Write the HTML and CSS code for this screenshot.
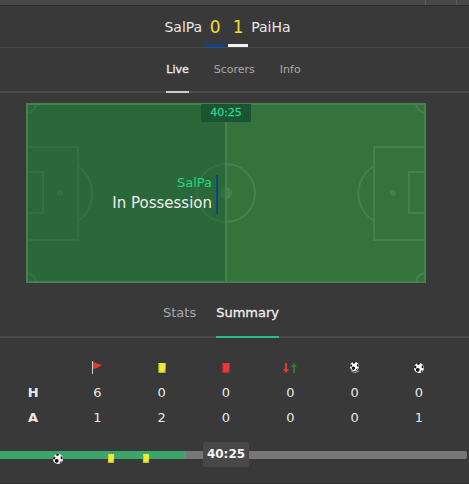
FILE: index.html
```html
<!DOCTYPE html>
<html lang="en">
<head>
<meta charset="utf-8">
<meta name="viewport" content="width=device-width, initial-scale=1">
<title>SalPa 0 1 PaiHa</title>
<link rel="stylesheet" href="styles.css">
</head>
<body>
<svg class="defs" aria-hidden="true">
  <symbol id="ball" viewBox="0 0 20 20">
    <circle cx="10" cy="10" r="10" fill="#fff"/>
    <path fill="#111" d="M7 0h5l-1 3-3 1-2-2zM16 4l3 3 0 4-3-1-1-3zM1 6l3-1 1 3-2 3-3-1zM6 10l5 1 0 4-3 3-4-2 0-4zM15 15l3-1-3 4-2 0z"/>
  </symbol>
  <symbol id="card" viewBox="0 0 8 11">
    <path fill="currentColor" d="M0 0h8v11H0z"/>
    <path fill="#000" fill-opacity=".22" d="M0 1h1v9H0zM0 10l6 0 2-5v6H0z"/>
  </symbol>
</svg>
<div class="toolbar"><span></span><span></span></div>
<header class="score">
  <span class="team">SalPa</span>
  <span class="goals home">0</span>
  <span class="goals away">1</span>
  <span class="team">PaiHa</span>
</header>
<nav class="tabs">
  <a class="tab active" href="#live">Live</a>
  <a class="tab" href="#scorers">Scorers</a>
  <a class="tab" href="#info">Info</a>
</nav>
<main>
  <section class="pitch" id="live">
    <svg class="field" viewBox="0 0 400 180" aria-hidden="true">
      <path fill="#35733d" d="M0 0h400v180H0z"/>
      <g fill="none" stroke="#43834b" stroke-width="2">
        <path d="M200 0v180"/>
        <circle cx="200" cy="90" r="29"/>
        <path d="M400 44h-52v93h52M400 69h-17v41h17M348 63a32 32 0 0 0 0 55M390 0a10 10 0 0 0 10 10M390 180a10 10 0 0 1 10-10"/>
        <path d="M0 44h52v93H0M0 69h17v41H0M52 63a34 34 0 0 1 0 55M10 0a10 10 0 0 1-10 10M10 180a10 10 0 0 0-10-10"/>
      </g>
      <g fill="#43834b">
        <circle cx="200" cy="90" r="6"/>
        <circle cx="34" cy="90" r="3"/>
        <circle cx="367" cy="90" r="3"/>
      </g>
      <path fill="#1f5d38" fill-opacity=".5" d="M0 0h199v180H0z"/>
      <path fill="none" stroke="#43834b" stroke-width="2" d="M1 1h398v178H1z"/>
    </svg>
    <time class="clock">40:25</time>
    <div class="possession">
      <span class="side">SalPa</span>
      <span>In Possession</span>
    </div>
  </section>
</main>
<nav class="tabs subtabs">
  <a class="tab" href="#stats">Stats</a>
  <a class="tab active" href="#summary">Summary</a>
</nav>
<section class="summary" id="summary">
  <table>
    <thead>
      <tr>
        <td></td>
        <th scope="col" aria-label="Corners"><svg width="10" height="13" viewBox="0 0 10 13"><path fill="#ccc" d="M0 0h1v13H0z"/><path fill="#e33b36" d="M1 1l9 3-5 3-4 1z"/></svg></th>
        <th scope="col" aria-label="Yellow cards"><svg class="yellow" width="8" height="10"><use href="#card"/></svg></th>
        <th scope="col" aria-label="Red cards"><svg class="red" width="8" height="10"><use href="#card"/></svg></th>
        <th scope="col" aria-label="Substitutions"><svg width="14" height="10" viewBox="0 0 14 10"><path fill="#e33b36" d="M2 0h2v6h2L3 10 0 6h2z"/><path fill="#217f35" d="M10 10h2V4h2l-3-4-3 4h2z"/></svg></th>
        <th scope="col" aria-label="Penalties"><svg width="10" height="12" viewBox="0 0 10 12"><use href="#ball" width="9" height="9"/><path fill="none" stroke="#aaa" d="M1 9q4 3 8 0"/></svg></th>
        <th scope="col" aria-label="Goals"><svg width="10" height="10"><use href="#ball"/></svg></th>
      </tr>
    </thead>
    <tbody>
      <tr><th scope="row">H</th><td>6</td><td>0</td><td>0</td><td>0</td><td>0</td><td>0</td></tr>
      <tr><th scope="row">A</th><td>1</td><td>2</td><td>0</td><td>0</td><td>0</td><td>1</td></tr>
    </tbody>
  </table>
</section>
<footer class="timeline">
  <div class="track">
    <div class="elapsed" style="width:39.8%"></div>
    <svg class="event" style="left:12.4%" width="10" height="10"><use href="#ball"/></svg>
    <svg class="event yellow" style="left:23.8%" width="7" height="9"><use href="#card"/></svg>
    <svg class="event yellow" style="left:31.2%" width="7" height="9"><use href="#card"/></svg>
    <time class="now">40:25</time>
  </div>
</footer>
</body>
</html>
```

FILE: styles.css
```css
* {
  box-sizing: border-box;
}

body {
  margin: 0;
  background: #393939;
  color: #e8e8e8;
  font-family: Verdana, "DejaVu Sans", sans-serif;
  font-size: 13px;
  line-height: 16px;
}

svg {
  display: block;
}

.defs {
  position: absolute;
  width: 0;
  height: 0;
}

.yellow {
  color: #efe73b;
}

.red {
  color: #e73a3a;
}

.toolbar {
  display: flex;
  justify-content: flex-end;
  height: 6px;
  background: #484848;
  border-bottom: 1px solid #303030;
}

.toolbar span {
  width: 31px;
  border-left: 1px solid #5a5a5a;
}

.toolbar span:last-child {
  width: 13px;
}

.score {
  display: flex;
  justify-content: center;
  height: 42px;
  padding-right: 14px;
  border-bottom: 1px solid #4a4a4a;
  font-size: 14px;
  line-height: 42px;
}

.goals {
  width: 20px;
  height: 41px;
  margin-left: 3px;
  border-bottom: 3px solid #f2f2f2;
  color: #f5dc3c;
  font-size: 17px;
  text-align: center;
}

.away {
  margin-right: 3px;
}

.home {
  border-color: #0e418f;
}

.tabs {
  display: flex;
  justify-content: center;
  gap: 25px;
  height: 45px;
  padding-right: 2px;
  border-bottom: 2px solid #4a4a4a;
  font-size: 11px;
  line-height: 44px;
}

.tab {
  height: 45px;
  border-bottom: 2px solid transparent;
  color: #aaa;
  text-decoration: none;
}

.tab.active {
  border-color: #ccc;
  color: #eee;
  -webkit-text-stroke: 0.3px;
}

main {
  padding: 10px 43px 0 26px;
}

.pitch {
  position: relative;
}

.field {
  width: 100%;
  height: auto;
}

.clock {
  position: absolute;
  top: 1px;
  left: 50%;
  width: 50px;
  transform: translateX(-50%);
  background: #1b5433;
  color: #25d688;
  font-size: 11px;
  line-height: 18px;
  text-align: center;
  -webkit-text-stroke: 0.3px;
}

.possession {
  position: absolute;
  top: 40%;
  right: 52%;
  display: flex;
  flex-direction: column;
  height: 39px;
  padding-right: 4px;
  border-right: 2px solid #0e4383;
  color: #eee;
  font-size: 15px;
  line-height: 24px;
  text-align: right;
}

.side {
  color: #25d688;
  font-size: 13px;
  line-height: 16px;
}

.subtabs {
  gap: 20px;
  height: 55px;
  padding-right: 27px;
  font-size: 13px;
  line-height: 60px;
}

.subtabs .tab {
  height: 55px;
}

.subtabs .active {
  border-color: #2dbb8d;
}

.summary {
  padding: 17px 18px 0 1px;
}

table {
  width: 100%;
  table-layout: fixed;
  border-collapse: collapse;
}

th,
td {
  height: 25px;
  padding: 0;
  text-align: center;
}

th svg {
  margin: 0 auto;
}

.timeline {
  padding: 21px 2px 24px 0;
  border-bottom: 1px solid #303030;
}

.track {
  position: relative;
  height: 8px;
  border-radius: 0 2px 2px 0;
  background: #777;
}

.elapsed {
  height: 100%;
  background: #3ca56b;
}

.event {
  position: absolute;
  top: 3px;
  transform: translateX(-50%);
}

.now {
  position: absolute;
  top: -9px;
  left: 203px;
  width: 46px;
  border-radius: 2px;
  background: #484848;
  color: #f4f4f4;
  font-size: 12px;
  font-weight: bold;
  line-height: 25px;
  text-align: center;
}
```
